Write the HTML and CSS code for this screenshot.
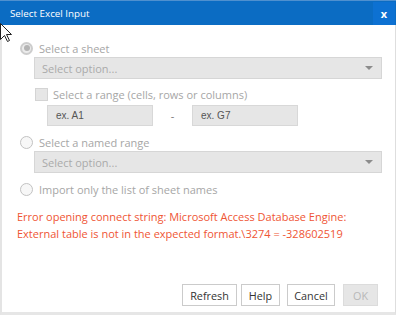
FILE: index.html
```html
<!DOCTYPE html>
<html>
<head>
<meta charset="utf-8">
<link rel="stylesheet" href="styles.css">
</head>
<body>
<div class="dialog">
  <div class="titlebar">
    <span class="title">Select Excel Input</span>
    <span class="close">x</span>
  </div>
  <div class="frame">
    <div class="row opt first"><span class="radio checked"></span><span class="label">Select a sheet</span></div>
    <div class="select"><span>Select option...</span><span class="caret"></span></div>
    <div class="row chk"><span class="checkbox"></span><span class="label">Select a range (cells, rows or columns)</span></div>
    <div class="range">
      <div class="input">ex. A1</div>
      <span class="dash">-</span>
      <div class="input">ex. G7</div>
    </div>
    <div class="row opt"><span class="radio"></span><span class="label">Select a named range</span></div>
    <div class="select"><span>Select option...</span><span class="caret"></span></div>
    <div class="row opt"><span class="radio"></span><span class="label">Import only the list of sheet names</span></div>
    <div class="error">Error opening connect string: Microsoft Access Database Engine:<br>External table is not in the expected format.\3274 = -328602519</div>
    <div class="buttons">
      <button class="btn refresh">Refresh</button>
      <button class="btn help">Help</button>
      <button class="btn cancel">Cancel</button>
      <button class="btn ok">OK</button>
    </div>
  </div>
</div>
<svg class="cursor" width="14" height="20" viewBox="0 0 14 20"><path d="M0.5 0.5 L0.5 16.5 L4.5 12.5 L7.5 18.5 L9.5 17.5 L6.5 11.5 L11.5 11.5 Z" fill="#fff" stroke="#222" stroke-width="1"/></svg>
</body>
</html>
```
FILE: styles.css
```css
html, body { margin: 0; padding: 0; background: #fff; }
body { width: 400px; height: 315px; overflow: hidden; position: relative; font-family: "Open Sans", "Noto Sans", sans-serif; }
.dialog { width: 396px; height: 315px; display: flex; flex-direction: column; }
.titlebar { height: 25px; background: #0b6cc3; border-top: 1px solid #4f90cf; box-sizing: border-box; display: flex; align-items: center; justify-content: space-between; }
.title { color: #fff; font-size: 9.8px; padding-left: 10px; }
.close { color: #fff; font-weight: bold; font-size: 11px; width: 22px; height: 23px; display: flex; align-items: center; justify-content: center; background: #0d71d2; margin-right: 1px; margin-top: 1px; }
.frame { flex: 1; border-left: 2px solid #e4e4e4; border-right: 1px solid #dedede; border-bottom: 3px solid #e6e6e6; padding: 15px 13px 6px 15px; display: flex; flex-direction: column; }
.row { height: 16px; display: flex; align-items: center; color: #a6a6a6; font-size: 11px; }
.opt { margin-left: 3px; margin-top: 8px; }
.opt.first { margin-top: 0; }
.radio { width: 13px; height: 13px; box-sizing: border-box; border: 1px solid #c2c2c2; border-radius: 50%; background: #f7f7f7; margin-right: 6px; flex: none; display: flex; align-items: center; justify-content: center; }
.radio.checked { border: 2px solid #cdcdcd; background: #ececec; }
.radio.checked::after { content: ""; width: 6px; height: 6px; border-radius: 50%; background: #b4b4b4; }
.select { margin-left: 17px; margin-top: 1px; height: 22px; box-sizing: border-box; background: #e6e6e6; border: 1px solid #d6d6d6; display: flex; align-items: center; justify-content: space-between; padding: 0 8px 0 7px; color: #aaa; font-size: 11px; }
.caret { width: 0; height: 0; border-left: 4px solid transparent; border-right: 4px solid transparent; border-top: 4px solid #8c8c8c; }
.chk { margin-left: 18px; margin-top: 7px; }
.checkbox { width: 13px; height: 13px; box-sizing: border-box; background: #e6e6e6; border: 1px solid #d4d4d4; margin-right: 5px; flex: none; }
.range { margin-left: 30px; margin-top: 3px; display: flex; align-items: center; height: 21px; }
.input { width: 106px; height: 21px; box-sizing: border-box; background: #e6e6e6; border: 1px solid #d8d8d8; font-family: "Liberation Sans", Arial, sans-serif; font-size: 10px; color: #555; display: flex; align-items: center; padding-left: 8px; }
.dash { width: 39px; text-align: center; color: #777; font-size: 11px; }
.error { margin-top: 12px; color: #ef5534; font-size: 11px; line-height: 16.5px; }
.buttons { margin-top: auto; display: flex; justify-content: flex-end; margin-right: 4px; }
.btn { height: 22px; box-sizing: border-box; background: #fff; border: 1px solid #cbcbcb; font-family: "Open Sans", "Noto Sans", sans-serif; font-size: 10.8px; color: #333; padding: 0; margin: 0; text-align: center; }
.refresh { width: 55px; }
.help { width: 39px; margin-left: 4px; }
.cancel { width: 48px; margin-left: 7px; }
.ok { width: 35px; margin-left: 8px; background: #e6e6e6; color: #b8b8b8; border-color: #dcdcdc; }
.cursor { position: absolute; left: 0; top: 23px; }
```
